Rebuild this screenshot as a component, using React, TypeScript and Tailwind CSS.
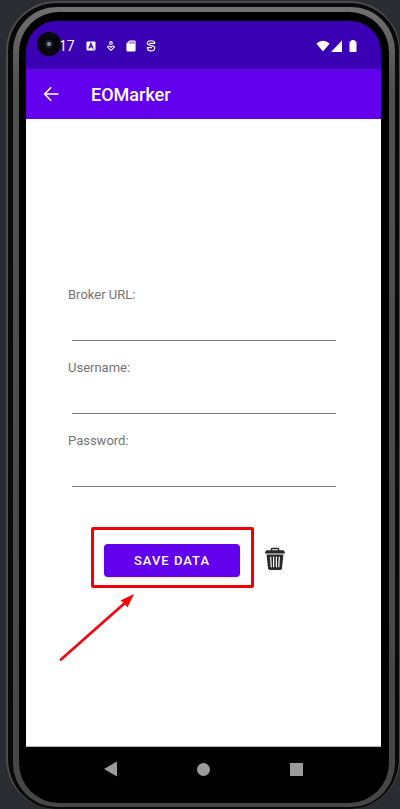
import React from "react";

function StatusBar() {
  return (
    <div className="flex h-12 shrink-0 items-center bg-[#3a00b3] pl-[11px] pr-6 pt-0.5 text-white">
      <span className="relative z-10 flex size-6 shrink-0 -translate-y-0.5 items-center justify-center rounded-full bg-[#08080c]">
        <span className="flex size-2 items-center justify-center rounded-full bg-[#1c222c]">
          <span className="size-1 rounded-full bg-[#8291a8]" />
        </span>
      </span>
      <span className="-ml-0.5 text-sm leading-4">17</span>
      <div className="ml-[11px] flex items-center gap-2.5">
        <svg className="size-[10px]" viewBox="0 0 10 10" aria-hidden="true">
          <rect x="0.5" y="0.5" width="9" height="9" rx="1" fill="#fff" />
          <path d="M2.8 7.4 4.9 2.4 7 7.4M3.5 5.8H6.3" fill="none" stroke="#3a00b3" strokeWidth="1.2" />
          <path d="M7.5 8.2h1.2" stroke="#3a00b3" strokeWidth="0.8" />
        </svg>
        <svg className="size-[10px]" viewBox="0 0 10 10" fill="none" stroke="#fff" strokeWidth="1.1" aria-hidden="true">
          <circle cx="5" cy="1.9" r="1.3" />
          <path d="M5 9.3 1.6 6.1Q2.2 3.9 5 6.2 7.8 3.9 8.4 6.1Z" />
        </svg>
        <svg className="h-3 w-[10px]" viewBox="0 0 10 12" aria-hidden="true">
          <path d="M3.3.5H8.6Q9.6.5 9.6 1.5V10.5Q9.6 11.5 8.6 11.5H1.4Q.4 11.5.4 10.5V3.6Z" fill="#fff" />
          <path d="M4 1.5v2.2M6 1.5v2.2M8 1.5v2.2" stroke="#3a00b3" strokeWidth="0.9" />
        </svg>
        <svg className="h-3 w-[10px]" viewBox="0 0 10 12" fill="none" stroke="#fff" strokeWidth="1.2" aria-hidden="true">
          <path d="M8.8 3.4C8.6-.1 1.4-.1 1.3 3.2 1.2 6.4 8.8 4.800 8.800 7.800 8.600 12 1.400 12 1.300 7.600H5.800" />
          <path d="M3.200 3.300H9.200" />
        </svg>
      </div>
      <div className="ml-auto flex items-center">
        <svg className="h-3 w-[14px]" viewBox="0 0 14 12" aria-hidden="true">
          <path d="M.3 3.5Q7-2.2 13.7 3.5L7 11.5Z" fill="#fff" />
        </svg>
        <svg className="ml-px h-3 w-[11px]" viewBox="0 0 11 12" aria-hidden="true">
          <path d="M11 .5V12H0Z" fill="#fff" />
        </svg>
        <svg className="ml-[7px] h-3 w-2" viewBox="0 0 8 12" aria-hidden="true">
          <path d="M2.3 0H5.7V1.2H6.7Q7.5 1.2 7.5 2V11.2Q7.5 12 6.7 12H1.3Q.5 12 .5 11.2V2Q.5 1.2 1.3 1.2H2.3Z" fill="#fff" />
        </svg>
      </div>
    </div>
  );
}

function AppBar() {
  return (
    <header className="flex h-[50px] shrink-0 items-center bg-[#6200ee] pl-[17px] pt-0.5 text-white shadow-sm">
      <button type="button" aria-label="Back" className="-mt-0.5 flex size-4 items-center justify-center">
        <svg className="size-4" viewBox="0 0 16 16" fill="none" stroke="#fff" strokeWidth="1.6" aria-hidden="true">
          <path d="M8.2 1.2 1.7 8l6.5 6.8M2 8H15.5" />
        </svg>
      </button>
      <h1 className="ml-8 text-lg font-medium">EOMarker</h1>
    </header>
  );
}

function Field({ id, label, type }: { id: string; label: string; type: string }) {
  return (
    <div className="flex flex-col">
      <label htmlFor={id} className="text-[13px] leading-4 text-[#747474]">
        {label}
      </label>
      <input
        id={id}
        type={type}
        className="mx-1 h-[38px] border-b border-[#7b7b7b] bg-transparent text-sm text-[#222] outline-none"
      />
    </div>
  );
}

function TrashIcon() {
  return (
    <svg className="h-6 w-5" viewBox="0 0 20 24" aria-hidden="true">
      <path d="M6.5 3.8V2.1Q6.5 1.4 7.2 1.4H12.8Q13.5 1.4 13.5 2.1V3.8" fill="none" stroke="#292929" strokeWidth="1.5" />
      <path d="M2 3.2H18Q19.8 3.4 20 6.6H0Q.2 3.4 2 3.2Z" fill="#292929" />
      <path d="M1.6 7.6H18.4L17 21.3Q16.8 23 15 23H5Q3.200 23 3 21.300Z" fill="#292929" />
      <path d="M5.700 10 6.200 19.800M8.600 10V19.800M11.400 10V19.800M14.300 10 13.800 19.800" stroke="#fff" strokeWidth="1.2" strokeLinecap="round" />
    </svg>
  );
}

function NavBar() {
  return (
    <nav className="flex h-11 shrink-0 items-center justify-between bg-black px-[78px]">
      <button type="button" aria-label="Back">
        <svg className="h-4 w-[13px]" viewBox="0 0 13 16" aria-hidden="true">
          <path d="M0 8 13 .4V15.6Z" fill="#9c9c9c" />
        </svg>
      </button>
      <button type="button" aria-label="Home" className="size-[13px] rounded-full bg-[#9c9c9c]" />
      <button type="button" aria-label="Recent apps" className="size-[13px] bg-[#9c9c9c]" />
    </nav>
  );
}

export default function App() {
  return (
    <div className="flex min-h-screen bg-[#2b2c31] pl-1.5 pt-px font-[Roboto,sans-serif]">
      <div className="flex min-w-0 flex-1 rounded-[50px] border-2 border-r border-b-0 border-[#4c4c4c] bg-[#090909] pb-0.5 pl-[5px] pr-1 pt-1">
        <div className="flex min-w-0 flex-1 rounded-[44px] bg-linear-to-b from-[#707070] via-[#505050] via-10% to-[#464646] px-1.5 pb-1 pt-[5px]">
          <div className="flex min-w-0 flex-1 flex-col rounded-[40px] bg-black pb-3 pl-[7px] pr-2 pt-[9px]">
            <div className="flex flex-1 flex-col overflow-hidden rounded-t-[31px] rounded-b-[28px] bg-black">
              <StatusBar />
              <AppBar />
              <main className="flex-1 border-b border-[#b5b5b5] bg-white pl-[42px] pr-[41px] pt-[168px]">
                <form onSubmit={(e) => e.preventDefault()}>
                  <div className="flex flex-col gap-[19px]">
                    <Field id="broker" label="Broker URL:" type="url" />
                    <Field id="username" label="Username:" type="text" />
                    <Field id="password" label="Password:" type="password" />
                  </div>
                  <div className="mt-[57px] flex items-center gap-[25px] pl-9">
                    <div className="relative">
                      <button
                        type="submit"
                        className="h-[33px] w-[136px] rounded bg-[#6200ee] pt-px text-[13px] font-medium tracking-[1px] text-white shadow-sm"
                      >
                        SAVE DATA
                      </button>
                      <div className="pointer-events-none absolute -bottom-[11px] -left-[13px] -right-[14px] -top-[17px] rounded-xs border-3 border-[#f00008]" />
                      <svg
                        className="pointer-events-none absolute -left-[46px] top-[49px] h-[70px] w-20"
                        viewBox="0 0 80 70"
                        aria-hidden="true"
                      >
                        <path d="M3 66.500 68 9" stroke="#ee0a14" strokeWidth="2.800" strokeLinecap="round" />
                        <path d="M76 1 62.500 7.500 66 10 69.500 14.500Z" fill="#ff0000" />
                      </svg>
                    </div>
                    <button type="button" aria-label="Delete data" className="-mt-1">
                      <TrashIcon />
                    </button>
                  </div>
                </form>
              </main>
              <NavBar />
            </div>
          </div>
        </div>
      </div>
    </div>
  );
}
